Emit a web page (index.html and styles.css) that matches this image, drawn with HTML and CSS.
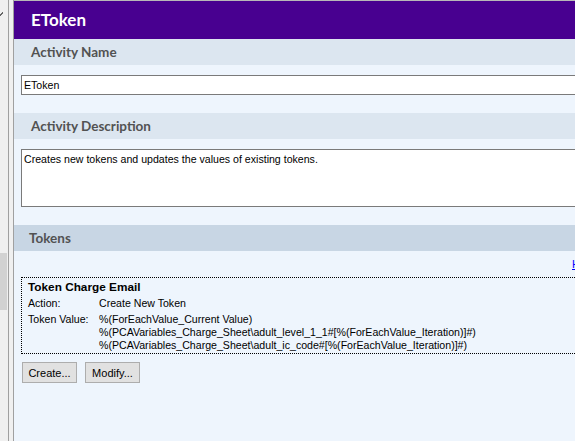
FILE: index.html
```html
<!DOCTYPE html>
<html>
<head>
<meta charset="utf-8">
<link rel="stylesheet" href="styles.css">
</head>
<body>
<div class="app">
  <div class="sidebar">
    <div class="side-outer">
      <div class="side-mark"></div>
      <div class="side-block"></div>
    </div>
    <div class="side-inner"></div>
  </div>
  <div class="main">
    <div class="titlebar">EToken</div>
    <div class="section-head">Activity Name</div>
    <div class="field-wrap">
      <div class="input">EToken</div>
    </div>
    <div class="section-head">Activity Description</div>
    <div class="field-wrap">
      <div class="textarea">Creates new tokens and updates the values of existing tokens.</div>
    </div>
    <div class="section-head dark">Tokens</div>
    <div class="link-row"><a class="help" href="#">Help</a></div>
    <div class="token-box">
      <div class="token-title">Token Charge Email</div>
      <div class="token-row">
        <div class="token-label">Action:</div>
        <div class="token-value">Create New Token</div>
      </div>
      <div class="token-row">
        <div class="token-label">Token Value:</div>
        <div class="token-value">
          <div>%(ForEachValue_Current Value)</div>
          <div>%(PCAVariables_Charge_Sheet\adult_level_1_1#[%(ForEachValue_Iteration)]#)</div>
          <div>%(PCAVariables_Charge_Sheet\adult_ic_code#[%(ForEachValue_Iteration)]#)</div>
        </div>
      </div>
    </div>
    <div class="buttons">
      <button class="btn">Create...</button>
      <button class="btn">Modify...</button>
    </div>
  </div>
</div>
</body>
</html>
```
FILE: styles.css
```css
html, body {
  margin: 0;
  padding: 0;
  width: 575px;
  height: 441px;
  overflow: hidden;
  background: #f0f0f0;
  font-family: "Liberation Sans", Arial, sans-serif;
}
.app {
  display: flex;
  height: 441px;
}
.sidebar {
  display: flex;
  width: 14px;
  flex: 0 0 14px;
}
.side-outer {
  width: 8px;
  border-right: 1px solid #a0a0a0;
  background: #f0f0f0;
  display: flex;
  flex-direction: column;
}
.side-mark {
  width: 3px;
  height: 4px;
  margin-top: 12px;
  background: linear-gradient(135deg, transparent 30%, #666 30%, #666 70%, transparent 70%);
}
.side-block {
  margin-top: 237px;
  width: 7px;
  height: 57px;
  background: #d2d2d2;
}
.side-inner {
  width: 4px;
  border-right: 1px solid #a0a0a0;
  background: #f0f0f0;
}
.main {
  flex: 1;
  min-width: 0;
  background: #eef5fd;
  border-top: 1px solid #b8b8b8;
  display: flex;
  flex-direction: column;
}
.titlebar {
  height: 38px;
  background: #480090;
  color: #fff;
  font-family: Lato, "Open Sans", sans-serif;
  font-weight: bold;
  font-size: 17px;
  line-height: 38px;
  padding-left: 17px;
}
.section-head {
  height: 26px;
  line-height: 26px;
  background: #dce6f0;
  color: #525252;
  font-family: Lato, "Open Sans", sans-serif;
  font-weight: bold;
  font-size: 13.5px;
  padding-left: 17px;
}
.section-head.dark {
  background: #c8d6e4;
  padding-left: 15px;
}
.field-wrap {
  padding: 10px 0 18px 7px;
}
.input {
  height: 18px;
  line-height: 18px;
  background: #fff;
  border: 1px solid #7a7a7a;
  border-right: none;
  font-size: 10.6px;
  color: #000;
  padding-left: 2px;
}
.textarea {
  height: 50px;
  background: #fff;
  border: 1px solid #7a7a7a;
  border-right: none;
  font-size: 10.6px;
  color: #000;
  padding: 3px 2px;
  line-height: 13px;
}
.link-row {
  height: 26px;
  padding-left: 558px;
  display: flex;
  align-items: center;
}
.help {
  color: #0000ff;
  font-size: 11px;
  text-decoration: underline;
  white-space: nowrap;
}
.token-box {
  margin-left: 7px;
  border: 1px dotted #000;
  border-right: none;
  height: 73px;
  padding: 2px 0 0 6px;
  font-size: 10.6px;
  color: #000;
  line-height: 13px;
}
.token-title {
  font-weight: bold;
  font-size: 11.8px;
  line-height: 15px;
  margin-bottom: 2px;
}
.token-row {
  display: flex;
  margin-bottom: 3px;
}
.token-label {
  width: 71px;
  flex: 0 0 71px;
}
.token-value {
  white-space: nowrap;
}
.buttons {
  display: flex;
  gap: 8px;
  padding: 8px 0 0 8px;
}
.btn {
  width: 55px;
  height: 21px;
  background: #e1e1e1;
  border: 1px solid #adadad;
  font-family: "Liberation Sans", Arial, sans-serif;
  font-size: 11px;
  color: #000;
  padding: 0;
  margin: 0;
}
```
